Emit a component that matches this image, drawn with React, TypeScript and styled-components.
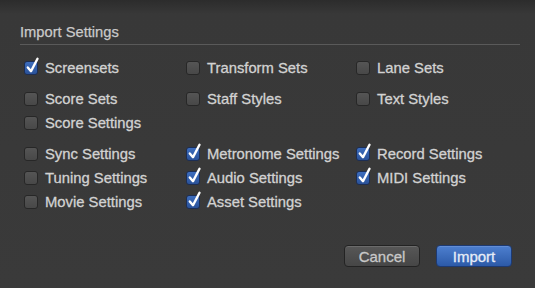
import React from 'react'
import styled, { createGlobalStyle } from 'styled-components'

const Global = createGlobalStyle`
    html, body {
        margin: 0;
        background: #3a3a3a;
    }
`

const Panel = styled.div`
    width: 535px;
    height: 288px;
    box-sizing: border-box;
    padding: 24px 15px 0 20px;
    background: linear-gradient(#2c2c2c 0px, #383838 14px, #3a3a3a 100%);
    font-family: 'Liberation Sans', Arial, sans-serif;
    color: #d2d2d2;
    overflow: hidden;
`

const Title = styled.div`
    font-size: 14.7px;
    line-height: 16px;
    color: #cacaca;
    -webkit-text-stroke: 0.25px #cacaca;
`

const Rule = styled.div`
    height: 1px;
    margin-top: 4px;
    background: #5a5a5a;
`

const Group = styled.div<{ $gap: number }>`
    display: grid;
    grid-template-columns: 162px 170px 1fr;
    grid-auto-rows: 24px;
    margin-top: ${(p) => p.$gap}px;
    padding-left: 4px;
`

const Option = styled.label`
    display: flex;
    align-items: center;
    gap: 7px;
    font-size: 14.8px;
    white-space: nowrap;
    -webkit-text-stroke: 0.3px #d2d2d2;
`

const Box = styled.span<{ $on: boolean }>`
    position: relative;
    width: 14px;
    height: 14px;
    box-sizing: border-box;
    border-radius: 3px;
    border: 1px solid ${(p) => (p.$on ? '#1c2e55' : '#272727')};
    background: ${(p) =>
        p.$on ? 'linear-gradient(#3d6dbd, #2a5299)' : 'linear-gradient(#555, #484848)'};
    flex-shrink: 0;

    svg {
        position: absolute;
        left: 0px;
        top: -5px;
    }
`

const Buttons = styled.div`
    display: flex;
    justify-content: flex-end;
    gap: 16px;
    margin-top: 31px;
    padding-right: 8px;
`

const Button = styled.button<{ $primary?: boolean }>`
    width: 76px;
    height: 22px;
    border-radius: 4px;
    font-family: 'Liberation Sans', Arial, sans-serif;
    font-size: 15px;
    padding: 0;
    color: ${(p) => (p.$primary ? '#e6ecf7' : '#c8c8c8')};
    -webkit-text-stroke: 0.3px ${(p) => (p.$primary ? '#e6ecf7' : '#c8c8c8')};
    border: 1px solid ${(p) => (p.$primary ? '#1d3a73' : '#232323')};
    background: ${(p) =>
        p.$primary ? 'linear-gradient(#4d7fcf, #2c5aa8)' : 'linear-gradient(#575757, #464646)'};
    box-shadow: inset 0 1px 0 rgba(255, 255, 255, 0.12);
`

const Check = () => (
    <svg width="15" height="18" viewBox="0 0 15 18">
        <path
            d="M2.8 10.5 L6 14.2 L12.5 1.8"
            fill="none"
            stroke="#fff"
            strokeWidth="2.4"
            strokeLinecap="round"
            strokeLinejoin="round"
        />
    </svg>
)

type Item = { label: string; on?: boolean } | null

const Row = ({ items }: { items: Item[] }) => (
    <>
        {items.map((it, i) =>
            it ? (
                <Option key={i}>
                    <Box $on={!!it.on}>{it.on && <Check />}</Box>
                    {it.label}
                </Option>
            ) : (
                <span key={i} />
            )
        )}
    </>
)

export default function App() {
    return (
        <>
            <Global />
            <Panel>
                <Title>Import Settings</Title>
                <Rule />
                <Group $gap={11}>
                    <Row
                        items={[
                            { label: 'Screensets', on: true },
                            { label: 'Transform Sets' },
                            { label: 'Lane Sets' },
                        ]}
                    />
                </Group>
                <Group $gap={7}>
                    <Row items={[{ label: 'Score Sets' }, { label: 'Staff Styles' }, { label: 'Text Styles' }]} />
                    <Row items={[{ label: 'Score Settings' }, null, null]} />
                </Group>
                <Group $gap={7}>
                    <Row
                        items={[
                            { label: 'Sync Settings' },
                            { label: 'Metronome Settings', on: true },
                            { label: 'Record Settings', on: true },
                        ]}
                    />
                    <Row
                        items={[
                            { label: 'Tuning Settings' },
                            { label: 'Audio Settings', on: true },
                            { label: 'MIDI Settings', on: true },
                        ]}
                    />
                    <Row items={[{ label: 'Movie Settings' }, { label: 'Asset Settings', on: true }, null]} />
                </Group>
                <Buttons>
                    <Button>Cancel</Button>
                    <Button $primary>Import</Button>
                </Buttons>
            </Panel>
        </>
    )
}
